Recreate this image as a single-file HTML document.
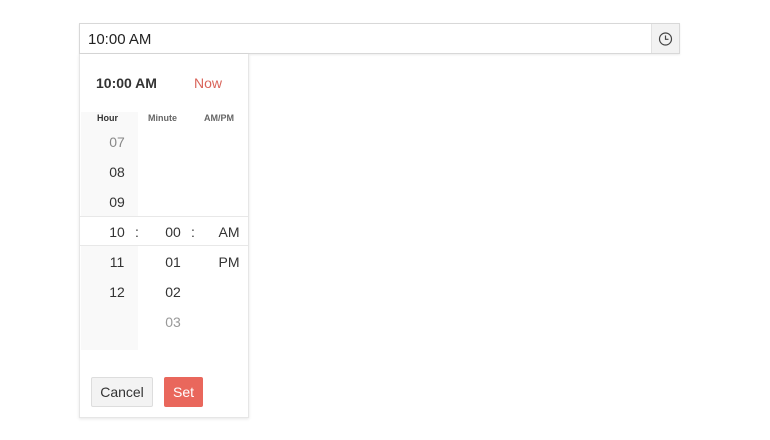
<!DOCTYPE html>
<html><head><style>
body{margin:0;width:770px;height:440px;background:#fff;font-family:"Liberation Sans",sans-serif;position:relative;overflow:hidden;color:#333}
.a{position:absolute}
.inp{left:79px;top:23px;width:599px;height:29px;border:1px solid #d8d8d8;box-shadow:0 1px 2px rgba(0,0,0,.08)}
.btn{left:651px;top:24px;width:27px;height:29px;background:#f2f2f2;border-left:1px solid #e2e2e2}
.pop{left:79px;top:54px;width:168px;height:363px;border:1px solid #e6e6e6;border-top:none;box-shadow:0 1px 3px rgba(0,0,0,.1);background:#fff}
.n{position:absolute;font-size:14px;width:40px;text-align:center}
</style></head><body>
<div class="a inp"></div>
<div class="a" style="left:88px;top:31px;font-size:15px;color:#222">10:00 AM</div>
<div class="a btn"><svg width="27" height="29"><circle cx="13.5" cy="15" r="6" fill="none" stroke="#444" stroke-width="1.2"/><path d="M13.5 11.5V15.3H16.5" fill="none" stroke="#444" stroke-width="1.2"/></svg></div>
<div class="a pop">
<div class="a" style="left:1px;top:58px;width:57px;height:104px;background:#f9f9f9"></div>
<div class="a" style="left:1px;top:192px;width:57px;height:104px;background:#f9f9f9"></div>
<div class="a" style="left:16px;top:21px;font-size:14px;font-weight:bold;color:#333">10:00 AM</div>
<div class="a" style="left:114px;top:21px;font-size:14px;color:#d9645a">Now</div>
<div class="a" style="left:17px;top:59px;font-size:9px;font-weight:bold;color:#333">Hour</div>
<div class="a" style="left:68px;top:59px;font-size:9px;font-weight:bold;color:#666">Minute</div>
<div class="a" style="left:124px;top:59px;font-size:9px;font-weight:bold;color:#666">AM/PM</div>
<div class="a" style="left:0;top:162px;width:168px;height:28px;border-top:1px solid #e8e8e8;border-bottom:1px solid #e8e8e8"></div>
<div class="n" style="left:17px;top:80px;color:#888">07</div>
<div class="n" style="left:17px;top:110px">08</div>
<div class="n" style="left:17px;top:140px">09</div>
<div class="n" style="left:17px;top:170px">10</div>
<div class="n" style="left:37px;top:170px">:</div>
<div class="n" style="left:73px;top:170px">00</div>
<div class="n" style="left:93px;top:170px">:</div>
<div class="n" style="left:129px;top:170px">AM</div>
<div class="n" style="left:17px;top:200px">11</div>
<div class="n" style="left:73px;top:200px">01</div>
<div class="n" style="left:129px;top:200px">PM</div>
<div class="n" style="left:17px;top:230px">12</div>
<div class="n" style="left:73px;top:230px">02</div>
<div class="n" style="left:73px;top:260px;color:#999">03</div>
<div class="a" style="left:11px;top:323px;width:60px;height:28px;background:#f3f3f3;border:1px solid #ddd;border-radius:2px;font-size:14px;text-align:center;line-height:28px">Cancel</div>
<div class="a" style="left:84px;top:323px;width:39px;height:30px;background:#e9675c;color:#fff;border-radius:2px;font-size:14px;text-align:center;line-height:30px">Set</div>
</div>
</body></html>
